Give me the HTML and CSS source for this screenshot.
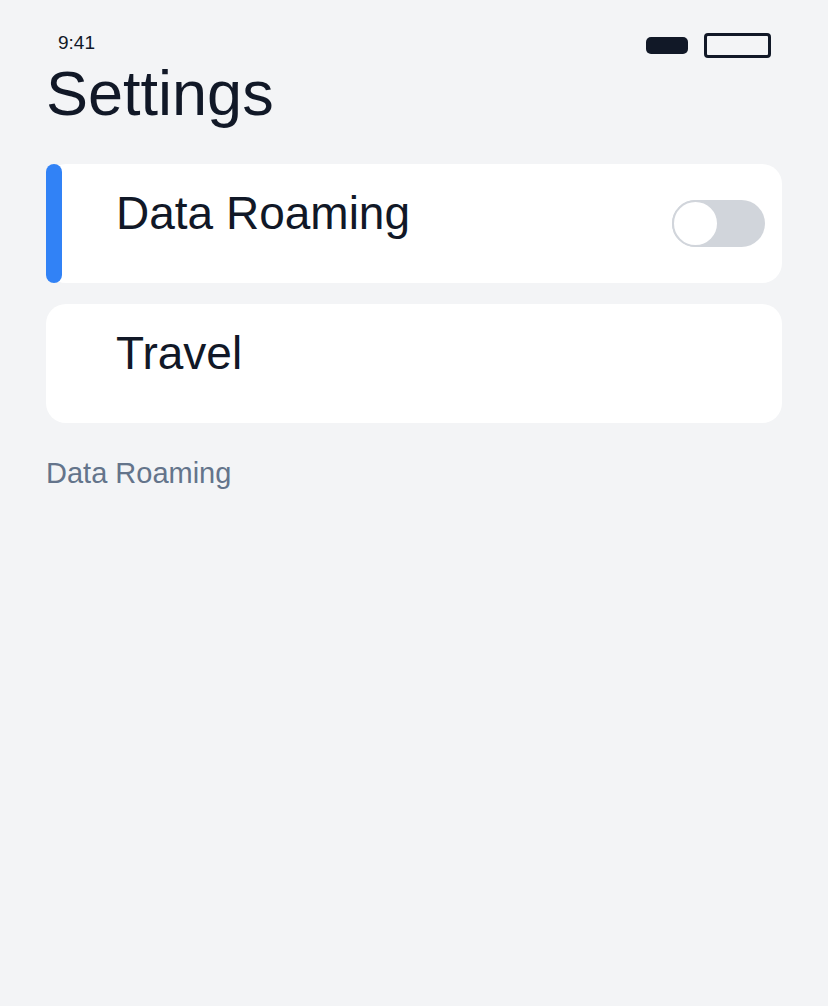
FILE: index.html
```html
<!DOCTYPE html>
<html lang="en">
<head>
    <meta charset="UTF-8">
    <title>Settings</title>
    <link rel="stylesheet" href="styles.css">
</head>
<body>
<div class="status-bar">
    <span class="status-time">9:41</span>
    <div class="status-icons">
        <span class="status-signal"></span>
        <span class="status-battery"></span>
    </div>
</div>
<h1 class="page-title">Settings</h1>
<div class="setting-list">
    <div class="setting-card is-active">
        <span class="setting-indicator"></span>
        <span class="setting-label">Data Roaming</span>
        <span class="setting-toggle"><span class="setting-knob"></span></span>
    </div>
    <div class="setting-card">
        <span class="setting-label">Travel</span>
    </div>
</div>
<p class="setting-caption">Data Roaming</p>
</body>
</html>
```

FILE: styles.css
```css
html, body {
    margin: 0px;
    padding: 0px;
}
body {
    background: #f3f4f6;
    color: #111827;
    font-family: "Liberation Sans", Arial, sans-serif;
    padding: 33px 46px 0px 46px;
    min-height: 1006px;
    box-sizing: border-box;
}
.status-bar {
    display: flex;
    justify-content: space-between;
    align-items: center;
    height: 25px;
    padding: 0px 11px 0px 12px;
}
.status-time {
    align-self: flex-start;
    font-size: 19px;
    line-height: 21px;
    margin-top: -1px;
}
.status-icons {
    display: flex;
    align-items: center;
    gap: 16px;
}
.status-signal {
    display: block;
    width: 42px;
    height: 17px;
    border-radius: 5px;
    background: #111827;
}
.status-battery {
    display: block;
    width: 67px;
    height: 25px;
    box-sizing: border-box;
    border: 3px solid #111827;
    border-radius: 4px;
}
.page-title {
    margin: -1px 0px 0px 0px;
    font-size: 63px;
    line-height: 72px;
    font-weight: normal;
}
.setting-list {
    display: flex;
    flex-direction: column;
    gap: 21px;
    margin-top: 35px;
}
.setting-card {
    position: relative;
    display: flex;
    align-items: flex-start;
    justify-content: space-between;
    height: 119px;
    box-sizing: border-box;
    padding: 23px 17px 0px 70px;
    background: #ffffff;
    border-radius: 20px;
}
.setting-indicator {
    position: absolute;
    left: 0px;
    top: 0px;
    bottom: 0px;
    width: 16px;
    border-radius: 8px;
    background: #3182f6;
}
.setting-label {
    font-size: 46px;
    line-height: 52px;
}
.setting-toggle {
    align-self: center;
    display: block;
    width: 93px;
    height: 47px;
    margin-top: -23px;
    border-radius: 24px;
    background: #d1d5db;
    position: relative;
}
.setting-knob {
    position: absolute;
    left: 0px;
    top: 0px;
    width: 47px;
    height: 47px;
    box-sizing: border-box;
    border-radius: 50%;
    border: 2px solid #d1d5db;
    background: #ffffff;
}
.setting-caption {
    margin: 34px 0px 0px 0px;
    font-size: 29px;
    line-height: 32px;
    color: #64748b;
}
```
